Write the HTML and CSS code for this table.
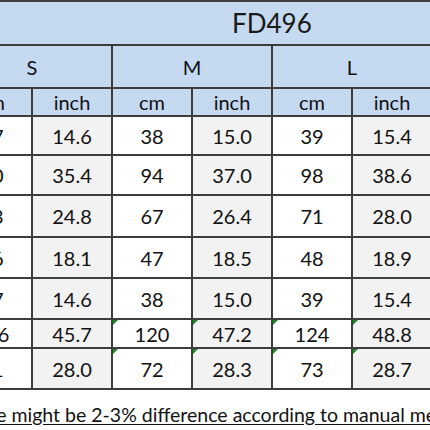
FILE: index.html
```html
<!DOCTYPE html>
<html lang="en">
<head>
<meta charset="UTF-8">
<meta name="viewport" content="width=device-width, initial-scale=1.0">
<title>FD496 Size Chart</title>
<link rel="stylesheet" href="styles.css">
</head>
<body>

<div class="sheet">
  <div class="chart">
    <div class="cell head title">FD496</div>

    <div class="cell head size">S</div>
    <div class="cell head size">M</div>
    <div class="cell head size">L</div>

    <div class="cell head">cm</div>
    <div class="cell head">inch</div>
    <div class="cell head">cm</div>
    <div class="cell head">inch</div>
    <div class="cell head">cm</div>
    <div class="cell head">inch</div>

    <div class="cell">37</div><div class="cell alt">14.6</div>
    <div class="cell">38</div><div class="cell alt">15.0</div>
    <div class="cell">39</div><div class="cell alt">15.4</div>

    <div class="cell">90</div><div class="cell alt">35.4</div>
    <div class="cell">94</div><div class="cell alt">37.0</div>
    <div class="cell">98</div><div class="cell alt">38.6</div>

    <div class="cell">63</div><div class="cell alt">24.8</div>
    <div class="cell">67</div><div class="cell alt">26.4</div>
    <div class="cell">71</div><div class="cell alt">28.0</div>

    <div class="cell">46</div><div class="cell alt">18.1</div>
    <div class="cell">47</div><div class="cell alt">18.5</div>
    <div class="cell">48</div><div class="cell alt">18.9</div>

    <div class="cell">37</div><div class="cell alt">14.6</div>
    <div class="cell">38</div><div class="cell alt">15.0</div>
    <div class="cell">39</div><div class="cell alt">15.4</div>

    <div class="cell">116</div><div class="cell alt">45.7</div>
    <div class="cell flag">120</div><div class="cell alt flag">47.2</div>
    <div class="cell flag">124</div><div class="cell alt flag">48.8</div>

    <div class="cell">71</div><div class="cell alt">28.0</div>
    <div class="cell flag">72</div><div class="cell alt flag">28.3</div>
    <div class="cell flag">73</div><div class="cell alt flag">28.7</div>
  </div>

  <p class="note">There might be 2-3% difference according to manual measurement.</p>
</div>

</body>
</html>
```

FILE: styles.css
```css
body {
  margin: 0;
  background: #fff;
  font-family: Lato, "Liberation Sans", sans-serif;
  color: #111;
}

.sheet {
  width: 430px;
  height: 430px;
  overflow: hidden;
}

.chart {
  display: grid;
  grid-template-columns: repeat(6, 78px);
  grid-template-rows: 42px 41px 26px 37px 38px 40px 39px 39px 27px 39px;
  gap: 2px;
  width: max-content;
  margin-left: -47px;
  padding: 2px 0;
  background: #3d3d3d;
}

.cell {
  position: relative;
  display: flex;
  align-items: center;
  justify-content: center;
  background: #fff;
  font-size: 20px;
}

.alt {
  background: #f2f2f2;
}

.head {
  background: #c5d9f1;
}

.title {
  grid-column: 1 / -1;
  justify-content: flex-start;
  padding-left: 279px;
  font-size: 26px;
  color: #1a1a1a;
}

.size {
  grid-column: span 2;
}

.flag::before {
  content: "";
  position: absolute;
  top: 0;
  left: 0;
  border-top: 5px solid #1f8a24;
  border-right: 5px solid transparent;
}

.note {
  margin: 13px 0 0 -43px;
  white-space: nowrap;
  font-size: 19.5px;
  text-decoration: underline;
  text-underline-offset: 2px;
}
```
